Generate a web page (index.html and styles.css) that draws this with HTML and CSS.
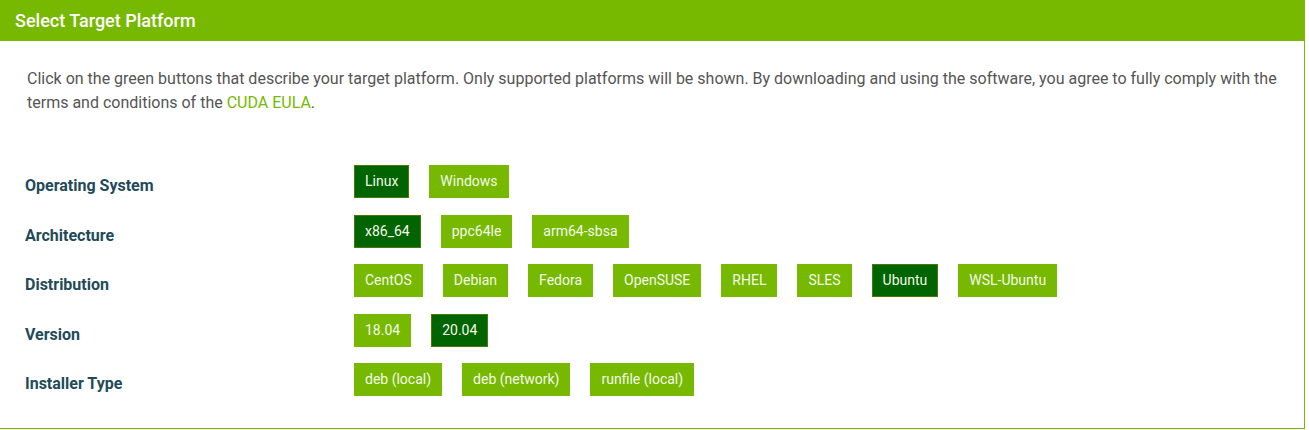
FILE: index.html
```html
<!DOCTYPE html>
<html>
<head>
<meta charset="utf-8">
<link rel="stylesheet" href="styles.css">
</head>
<body>
<div class="panel">
  <div class="panel-header">Select Target Platform</div>
  <div class="panel-body">
    <p class="intro">Click on the green buttons that describe your target platform. Only supported platforms will be shown. By downloading and using the software, you agree to fully comply with the terms and conditions of the <a class="link" href="#">CUDA EULA</a>.</p>
    <div class="options">
      <div class="label">Operating System</div>
      <div class="choices">
        <span class="btn active">Linux</span>
        <span class="btn">Windows</span>
      </div>
      <div class="label">Architecture</div>
      <div class="choices">
        <span class="btn active">x86_64</span>
        <span class="btn">ppc64le</span>
        <span class="btn">arm64-sbsa</span>
      </div>
      <div class="label">Distribution</div>
      <div class="choices">
        <span class="btn">CentOS</span>
        <span class="btn">Debian</span>
        <span class="btn">Fedora</span>
        <span class="btn">OpenSUSE</span>
        <span class="btn">RHEL</span>
        <span class="btn">SLES</span>
        <span class="btn active">Ubuntu</span>
        <span class="btn">WSL-Ubuntu</span>
      </div>
      <div class="label">Version</div>
      <div class="choices">
        <span class="btn">18.04</span>
        <span class="btn active">20.04</span>
      </div>
      <div class="label">Installer Type</div>
      <div class="choices">
        <span class="btn">deb (local)</span>
        <span class="btn">deb (network)</span>
        <span class="btn">runfile (local)</span>
      </div>
    </div>
  </div>
</div>
</body>
</html>
```
FILE: styles.css
```css
html, body {
  margin: 0;
  padding: 0;
  background: #fff;
}
body {
  font-family: Roboto, "Liberation Sans", sans-serif;
}
.panel {
  width: 1305px;
}
.panel-header {
  background: #76b900;
  color: #fff;
  height: 41px;
  line-height: 41px;
  padding-left: 15px;
  font-size: 18px;
  font-weight: 500;
}
.panel-body {
  border-right: 1px solid #76b900;
  border-bottom: 1px solid #76b900;
  box-sizing: border-box;
  height: 388px;
}
.intro {
  margin: 0;
  padding: 26px 20px 0 27px;
  font-size: 16px;
  line-height: 24px;
  color: #555;
}
.link {
  color: #76b900;
  text-decoration: none;
}
.options {
  margin-top: 50px;
  padding-left: 25px;
  display: grid;
  grid-template-columns: 329px 1fr;
  grid-auto-rows: 49.5px;
}
.label {
  padding-top: 9px;
  font-size: 16px;
  font-weight: 700;
  line-height: 24px;
  color: #1f4b59;
}
.choices {
  display: flex;
  gap: 20px;
  align-items: flex-start;
}
.btn {
  display: inline-block;
  box-sizing: border-box;
  height: 33px;
  line-height: 31px;
  padding: 0 10px;
  font-size: 14px;
  color: #f4f8ea;
  background: #76b900;
  border: 1px solid #76b900;
}
.btn.active {
  background: #006400;
  border-color: #4c7a00;
}
```
